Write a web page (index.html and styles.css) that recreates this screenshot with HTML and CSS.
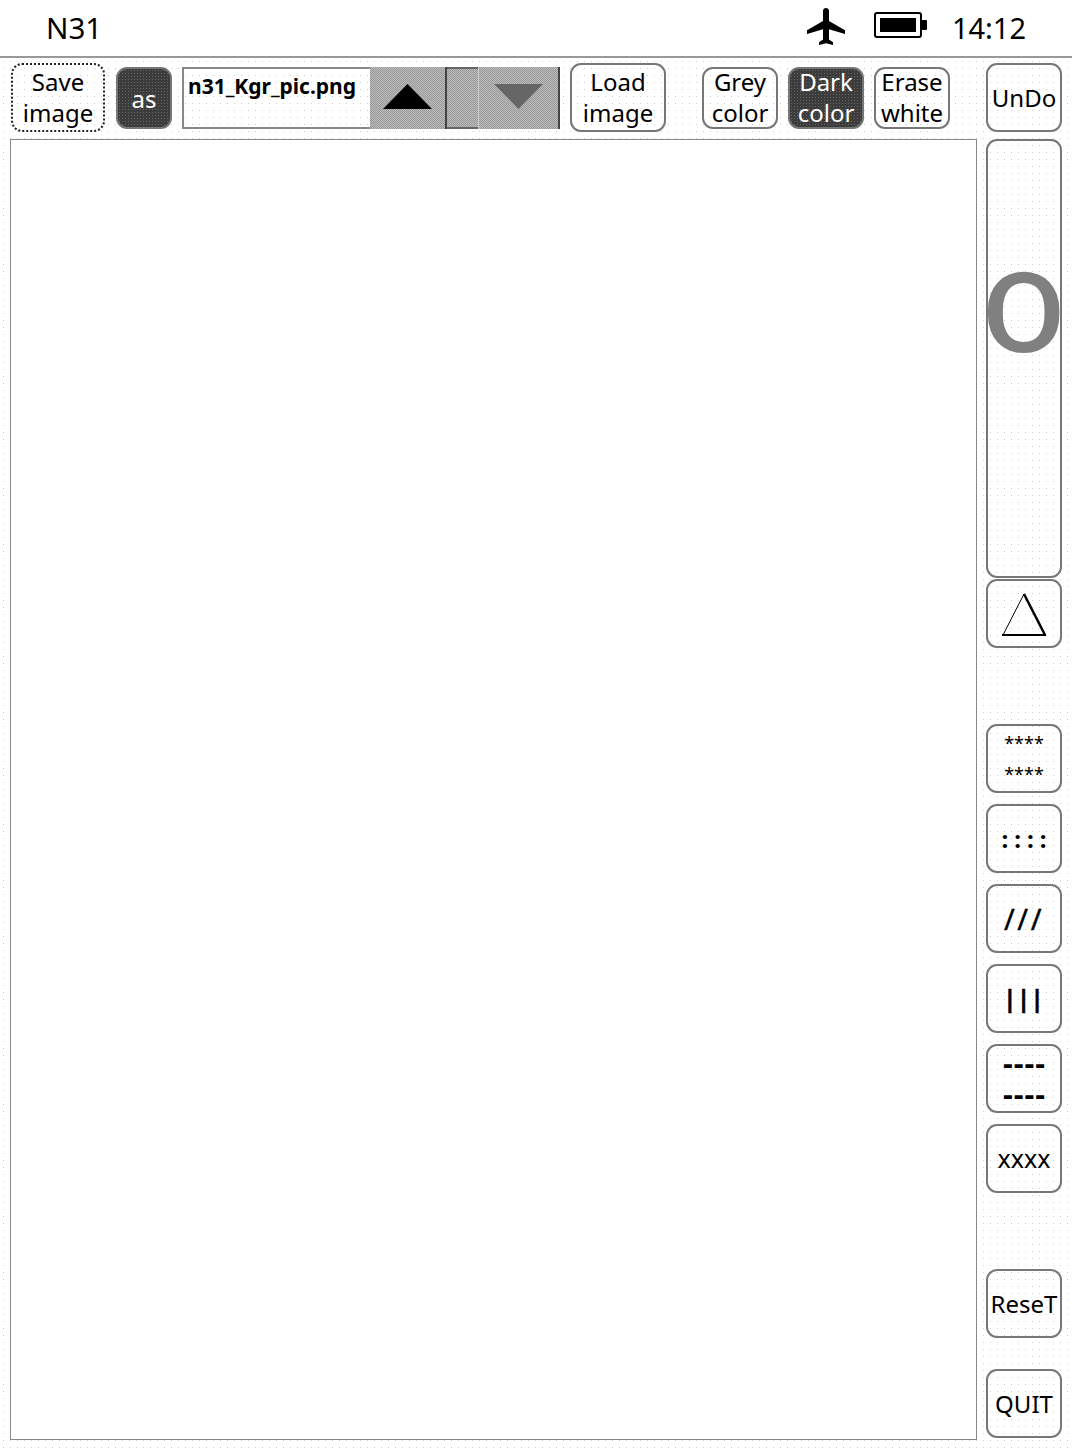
FILE: index.html
```html
<!DOCTYPE html>
<html lang="en">
<head>
    <title>N31</title>
    <link rel="stylesheet" href="styles.css">
</head>
<body>
    <header class="status-bar">
        <div class="device-name">N31</div>
        <div class="status-icons">
            <svg class="icon-plane" viewBox="2 2 19 20" preserveAspectRatio="none">
                <path d="M21 16v-2l-8-5V3.5c0-.83-.67-1.5-1.5-1.5S10 2.67 10 3.5V9l-8 5v2l8-2.5V19l-2 1.5V22l3.5-1 3.5 1v-1.5L13 19v-5.5l8 2.5z"/>
            </svg>
            <svg class="icon-battery" viewBox="0 0 53 26">
                <rect x="1" y="1" width="46" height="24" rx="2" fill="none" stroke="#000" stroke-width="2"/>
                <rect x="6" y="6" width="36" height="14"/>
                <rect x="47" y="8" width="6" height="10" rx="1"/>
            </svg>
            <div class="clock">14:12</div>
        </div>
    </header>

    <div class="main">
        <div class="work-area">
            <div class="toolbar">
                <button class="btn btn-save">Save<br>image</button>
                <button class="btn btn-as btn-dark">as</button>
                <div class="file-box">n31_Kgr_pic.png</div>
                <div class="file-arrows">
                    <div class="arrow-btn arrow-up">
                        <svg width="49" height="25" viewBox="0 0 50 26" preserveAspectRatio="none"><polygon points="25,0 50,26 0,26" fill="#000"/></svg>
                    </div>
                    <div class="arrow-gap"></div>
                    <div class="arrow-btn arrow-down">
                        <svg width="49" height="25" viewBox="0 0 50 26" preserveAspectRatio="none"><polygon points="0,0 50,0 25,26" fill="#666"/></svg>
                    </div>
                </div>
                <button class="btn btn-load">Load<br>image</button>
                <button class="btn btn-color btn-grey">Grey<br>color</button>
                <button class="btn btn-color btn-dark">Dark<br>color</button>
                <button class="btn btn-color">Erase<br>white</button>
            </div>
            <div class="canvas"></div>
        </div>

        <div class="side">
            <button class="btn side-btn undo">UnDo</button>
            <div class="btn slider"><span class="slider-mark">O</span></div>
            <button class="btn side-btn shape-btn">
                <svg width="46" height="44" viewBox="0 0 46 44">
                    <line x1="23" y1="1" x2="2" y2="42" stroke="#000" stroke-width="1"/>
                    <line x1="23" y1="1" x2="44" y2="42" stroke="#000" stroke-width="2.5"/>
                    <line x1="1" y1="42" x2="45" y2="42" stroke="#000" stroke-width="2"/>
                </svg>
            </button>
            <button class="btn side-btn brush stars first-brush">****<br>****</button>
            <button class="btn side-btn brush dots">::::</button>
            <button class="btn side-btn brush slashes">///</button>
            <button class="btn side-btn brush bars">|||</button>
            <button class="btn side-btn brush dashes">----<br>----</button>
            <button class="btn side-btn brush crosses">xxxx</button>
            <button class="btn side-btn reset">ReseT</button>
            <button class="btn side-btn quit">QUIT</button>
        </div>
    </div>
</body>
</html>
```

FILE: styles.css
```css
* {
    margin: 0;
    padding: 0;
    box-sizing: border-box;
}
body {
    font-family: "Noto Sans", sans-serif;
    background: #fff;
    color: #000;
    width: 1072px;
    height: 100vh;
    display: flex;
    flex-direction: column;
    overflow: hidden;
}
.status-bar {
    height: 58px;
    flex-shrink: 0;
    display: flex;
    justify-content: space-between;
    align-items: center;
    padding: 0 46px 2px 46px;
    border-bottom: 2px solid #999;
}
.device-name {
    font-size: 29.5px;
}
.clock {
    font-size: 29px;
}
.status-icons {
    display: flex;
    align-items: center;
}
.icon-plane {
    width: 38px;
    height: 37px;
    margin-right: 29px;
    margin-bottom: 2px;
}
.icon-battery {
    width: 53px;
    height: 26px;
    margin-right: 25px;
    margin-bottom: 4px;
}
.main {
    flex: 1;
    display: flex;
    padding: 0 10px 8px 10px;
    background-image: radial-gradient(#d0d0d0 0.6px, transparent 0.8px);
    background-size: 7px 7px;
}
.work-area {
    width: 967px;
    display: flex;
    flex-direction: column;
}
.toolbar {
    height: 81px;
    flex-shrink: 0;
    display: flex;
    align-items: center;
    padding: 0 0 2px 1px;
}
.canvas {
    flex: 1;
    background: #fff;
    border: 1px solid #888;
}
.btn {
    font-family: inherit;
    font-size: 24px;
    line-height: 31px;
    color: #000;
    background: transparent;
    border: 2px solid #777;
    border-radius: 11px;
    display: flex;
    align-items: center;
    justify-content: center;
    text-align: center;
}
.toolbar .btn {
    padding-bottom: 1px;
}
.btn-dark {
    color: #fff;
    background-color: #3c3c3c;
    background-image: radial-gradient(#666 0.5px, transparent 0.7px);
    background-size: 3px 3px;
}
.btn-save {
    width: 94px;
    height: 69px;
    border: 2px dotted #222;
}
.toolbar .btn-as {
    width: 56px;
    height: 62px;
    margin-left: 11px;
    padding: 1px 0 0 0;
}
.file-box {
    width: 188px;
    height: 62px;
    margin-left: 10px;
    padding: 4px 0 0 4px;
    border: 2px solid #888;
    border-right: none;
    font-size: 21px;
    line-height: 26px;
    font-weight: bold;
}
.file-arrows {
    width: 190px;
    height: 62px;
    display: flex;
    background-color: #aaa;
    background-image: repeating-conic-gradient(#999 0 25%, #bbb 0 50%);
    background-size: 2px 2px;
    border-right: 2px solid #444;
}
.arrow-btn {
    display: flex;
    align-items: center;
    justify-content: center;
    padding-bottom: 2px;
}
.arrow-up {
    width: 77px;
    border-right: 2px solid #444;
}
.arrow-gap {
    width: 31px;
    border-top: 2px solid #666;
    border-bottom: 2px solid #666;
}
.arrow-down {
    width: 80px;
    padding-right: 1px;
    border-left: 1px solid #ccc;
}
.btn-load {
    width: 96px;
    height: 69px;
    margin-left: 10px;
}
.btn-color {
    width: 76px;
    height: 62px;
    margin-left: 10px;
}
.btn-grey {
    margin-left: 36px;
}
.side {
    width: 76px;
    margin-left: 9px;
    display: flex;
    flex-direction: column;
}
.side-btn {
    height: 69px;
    flex-shrink: 0;
}
.undo {
    margin-top: 5px;
}
.slider {
    height: 439px;
    margin-top: 7px;
    flex-shrink: 0;
    overflow: visible;
    padding-bottom: 90px;
}
.slider-mark {
    display: inline-block;
    font-family: Roboto, sans-serif;
    font-weight: 500;
    font-size: 112px;
    line-height: 112px;
    color: #808080;
    transform: scaleX(1.08);
}
.shape-btn {
    margin-top: 1px;
    padding-top: 2px;
}
.brush {
    margin-top: 11px;
}
.first-brush {
    margin-top: 76px;
}
.stars {
    font-size: 18px;
}
.dots {
    font-size: 24px;
    font-weight: bold;
    letter-spacing: 6px;
    padding-left: 6px;
}
.slashes {
    font-size: 29px;
    letter-spacing: 2.5px;
    -webkit-text-stroke: 0.4px #000;
}
.bars {
    font-size: 23px;
    font-weight: bold;
    letter-spacing: 1px;
    -webkit-text-stroke: 0.6px #000;
}
.dashes {
    font-family: "DejaVu Sans", sans-serif;
    font-size: 26px;
    font-weight: bold;
    padding-top: 4px;
}
.crosses {
    font-size: 25px;
}
.reset {
    margin-top: 76px;
}
.quit {
    margin-top: 31px;
}
```
